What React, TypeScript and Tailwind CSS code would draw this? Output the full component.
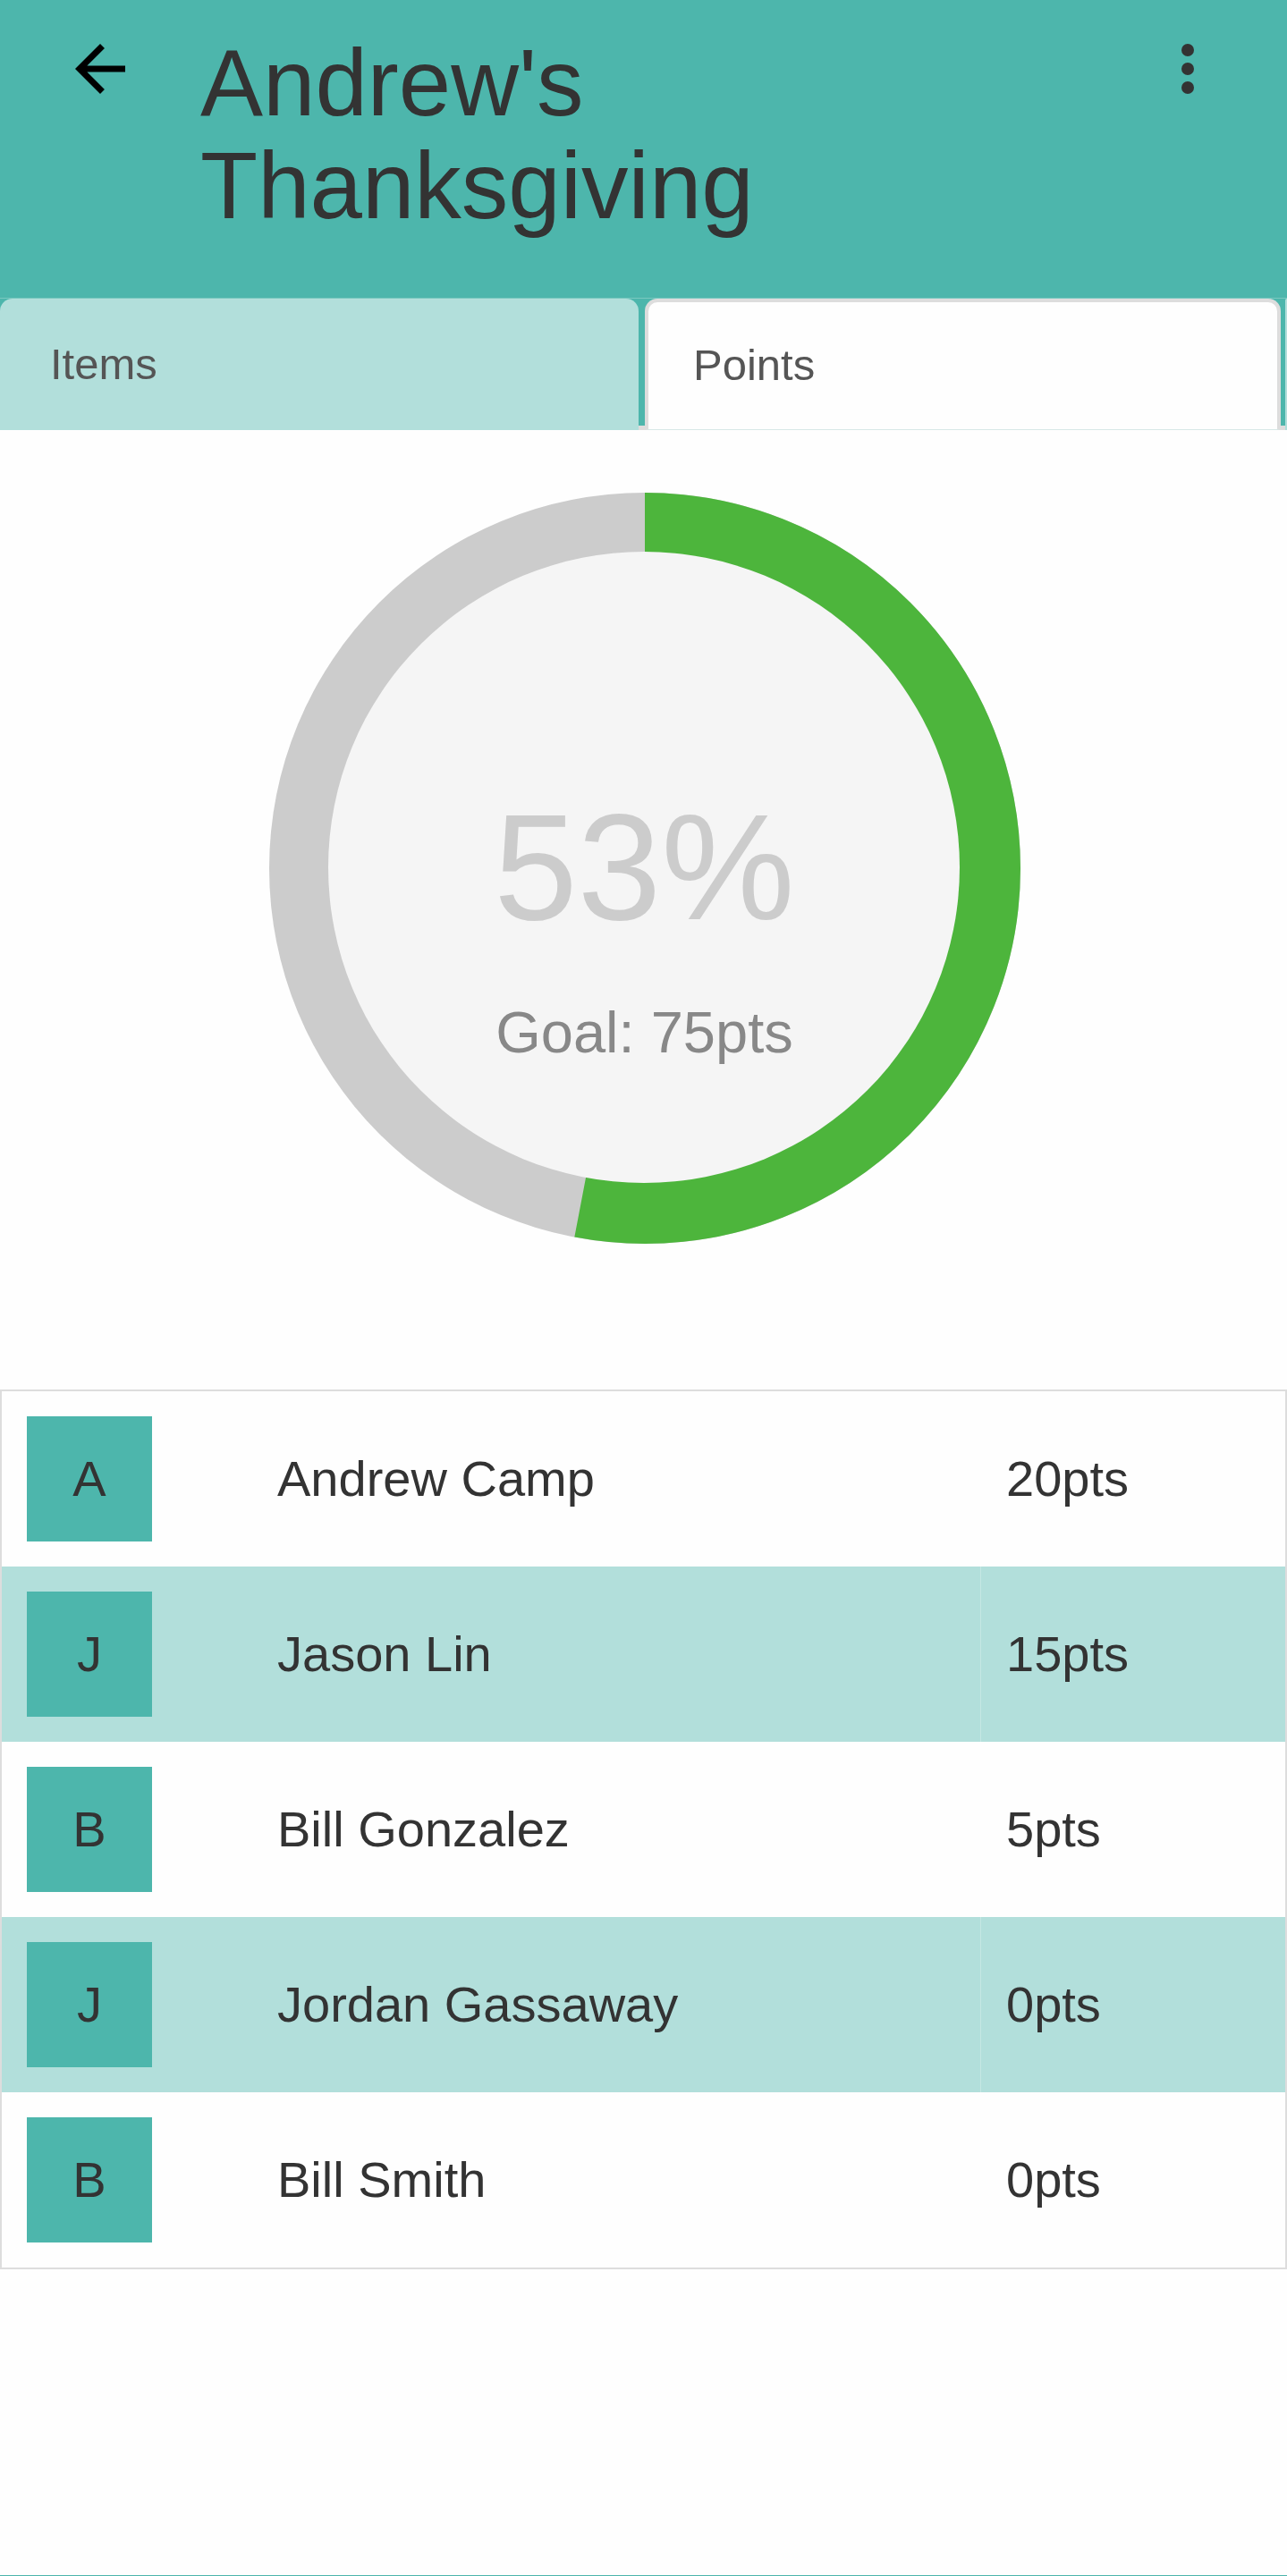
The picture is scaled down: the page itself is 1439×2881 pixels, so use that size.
type Member = { name: string; points: number };

const members: Member[] = [
  { name: "Andrew Camp", points: 20 },
  { name: "Jason Lin", points: 15 },
  { name: "Bill Gonzalez", points: 5 },
  { name: "Jordan Gassaway", points: 0 },
  { name: "Bill Smith", points: 0 },
];

function Header() {
  return (
    <header className="flex items-start bg-[#4db6ac] pt-[35px] pr-[69px] pb-[68px] pl-[70px]">
      <button type="button" aria-label="Back" className="shrink-0 text-black">
        <svg viewBox="0 0 24 24" className="size-[84px]" fill="currentColor">
          <path d="M20 11H7.83l5.59-5.59L12 4l-8 8 8 8 1.41-1.41L7.83 13H20v-2z" />
        </svg>
      </button>
      <h1 className="flex-1 px-[70px] text-[105px] leading-[115px]">Andrew's Thanksgiving</h1>
      <button type="button" aria-label="More options" className="shrink-0">
        <svg viewBox="0 0 24 24" className="size-[84px]" fill="currentColor">
          <circle cx="12" cy="6" r="2" />
          <circle cx="12" cy="12" r="2" />
          <circle cx="12" cy="18" r="2" />
        </svg>
      </button>
    </header>
  );
}

function Tabs() {
  return (
    <nav
      role="tablist"
      className="grid h-[148px] grid-cols-[714fr_7px_711fr_5px_2px] overflow-hidden border-t border-[#79c8c0] bg-[#4db6ac] text-[49px] text-[#555]"
    >
      <button
        type="button"
        role="tab"
        aria-selected="false"
        className="rounded-t-[14px] bg-[#b2dfdb] px-14 text-left"
      >
        Items
      </button>
      <span className="border-b-[5px] border-[#ddd]" />
      <button
        type="button"
        role="tab"
        aria-selected="true"
        className="rounded-t-[14px] border-4 border-b border-[#ddd] border-b-[#d8e8e7] bg-[#fefefe] px-[50px] text-left"
      >
        Points
      </button>
      <span className="border-b-[5px] border-[#ddd]" />
      <span className="rounded-tl-[14px] bg-[#b2dfdb]" />
    </nav>
  );
}

function Gauge({ percent, goal }: { percent: number; goal: number }) {
  return (
    <section className="grid justify-center pt-[70px] pb-[163px] pl-[2px]">
      <svg viewBox="0 0 840 840" className="col-start-1 row-start-1 size-[840px]">
        <circle cx="420" cy="420" r="420" fill="#ccc" />
        <circle
          cx="420"
          cy="420"
          r="380"
          fill="none"
          stroke="#4db53c"
          strokeWidth="80"
          pathLength="100"
          strokeDasharray={`${percent} 100`}
          transform="rotate(-90 420 420)"
        />
        <circle cx="419" cy="419" r="353" fill="#f5f5f5" />
      </svg>
      <div className="col-start-1 row-start-1 flex flex-col items-center pt-[335px]">
        <p className="text-[168px] leading-[168px] text-[#ccc]">{percent}%</p>
        <p className="pt-[61px] text-[65px] leading-[80px] text-[#888]">Goal: {goal}pts</p>
      </div>
    </section>
  );
}

function Scores() {
  return (
    <table className="w-full table-fixed border-separate border-spacing-0 border-2 border-[#ddd] text-[56px] leading-[64px]">
      <colgroup>
        <col className="w-[280px]" />
        <col />
        <col className="w-[341px]" />
      </colgroup>
      <tbody>
        {members.map((m) => (
          <tr key={m.name} className="h-[196px] even:bg-[#b2dfdb]">
            <td className="px-7 py-7">
              <div className="flex size-[140px] items-center justify-center bg-[#4db6ac]">{m.name[0]}</div>
            </td>
            <td className="px-7">{m.name}</td>
            <td className="border-l border-white/25 px-7">{m.points}pts</td>
          </tr>
        ))}
      </tbody>
    </table>
  );
}

export default function App() {
  return (
    <div className="min-h-screen border-b border-[#4db6ac] bg-[#fefefe] font-['Liberation_Sans',Arial,sans-serif] text-[#333]">
      <Header />
      <Tabs />
      <main>
        <Gauge percent={53} goal={75} />
        <Scores />
      </main>
    </div>
  );
}
